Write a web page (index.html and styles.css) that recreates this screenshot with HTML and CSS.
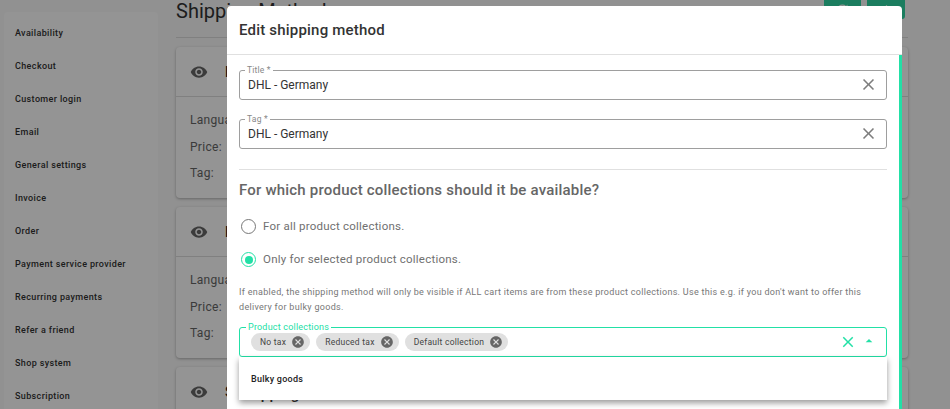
FILE: index.html
```html
<!DOCTYPE html>
<html lang="en">
<head>
<meta charset="utf-8">
<title>Edit shipping method</title>
<link rel="stylesheet" href="styles.css">
</head>
<body>
<div class="page">
  <nav class="sidebar">
    <a>Availability</a><a>Checkout</a><a>Customer login</a><a>Email</a><a>General settings</a><a>Invoice</a><a>Order</a><a>Payment service provider</a><a>Recurring payments</a><a>Refer a friend</a><a>Shop system</a><a>Subscription</a>
  </nav>
  <main class="main">
    <div class="main-head">
      <h1>Shipping Methods</h1>
      <div class="head-actions">
        <span class="head-btn"><svg viewBox="0 0 24 24"><path d="M17.65 6.35A7.96 7.96 0 0 0 12 4a8 8 0 1 0 7.73 10h-2.08A6 6 0 1 1 12 6c1.66 0 3.14.69 4.22 1.78L13 11h7V4z"/></svg></span>
        <span class="head-btn"><svg viewBox="0 0 24 24"><path d="M19 13h-6v6h-2v-6H5v-2h6V5h2v6h6z"/></svg></span>
      </div>
    </div>
    <section class="card">
      <div class="card-head"><svg class="eye" viewBox="0 0 24 24"><path d="M12 4.5C7 4.5 2.73 7.61 1 12c1.73 4.39 6 7.5 11 7.5s9.27-3.11 11-7.5c-1.73-4.39-6-7.5-11-7.5zM12 17c-2.76 0-5-2.24-5-5s2.24-5 5-5 5 2.24 5 5-2.24 5-5 5zm0-8c-1.66 0-3 1.34-3 3s1.34 3 3 3 3-1.34 3-3-1.34-3-3-3z"/></svg><b>DHL</b></div>
      <div class="card-body"><p>Language:</p><p>Price:</p><p>Tag:</p></div>
    </section>
    <section class="card">
      <div class="card-head"><svg class="eye" viewBox="0 0 24 24"><path d="M12 4.5C7 4.5 2.73 7.61 1 12c1.73 4.39 6 7.5 11 7.5s9.27-3.11 11-7.5c-1.73-4.39-6-7.5-11-7.5zM12 17c-2.76 0-5-2.24-5-5s2.24-5 5-5 5 2.24 5 5-2.24 5-5 5zm0-8c-1.66 0-3 1.34-3 3s1.34 3 3 3 3-1.34 3-3-1.34-3-3-3z"/></svg><b>DHL</b></div>
      <div class="card-body"><p>Language:</p><p>Price:</p><p>Tag:</p></div>
    </section>
    <section class="card">
      <div class="card-head"><svg class="eye" viewBox="0 0 24 24"><path d="M12 4.5C7 4.5 2.73 7.61 1 12c1.73 4.39 6 7.5 11 7.5s9.27-3.11 11-7.5c-1.73-4.39-6-7.5-11-7.5zM12 17c-2.76 0-5-2.24-5-5s2.24-5 5-5 5 2.24 5 5-2.24 5-5 5zm0-8c-1.66 0-3 1.34-3 3s1.34 3 3 3 3-1.34 3-3-1.34-3-3-3z"/></svg><b>Shipping</b></div>
    </section>
  </main>
</div>
<div class="scrim"></div>
<div class="modal" role="dialog">
  <header class="modal-head">Edit shipping method</header>
  <div class="modal-body">
    <div class="content">
      <div class="field">
        <label class="float">Title *</label>
        <span class="value">DHL - Germany</span>
        <svg class="x" viewBox="0 0 24 24"><path d="M19 6.41 17.59 5 12 10.59 6.41 5 5 6.41 10.59 12 5 17.59 6.41 19 12 13.41 17.59 19 19 17.59 13.41 12z"/></svg>
      </div>
      <div class="field">
        <label class="float">Tag *</label>
        <span class="value">DHL - Germany</span>
        <svg class="x" viewBox="0 0 24 24"><path d="M19 6.41 17.59 5 12 10.59 6.41 5 5 6.41 10.59 12 5 17.59 6.41 19 12 13.41 17.59 19 19 17.59 13.41 12z"/></svg>
      </div>
      <hr class="rule">
      <h2>For which product collections should it be available?</h2>
      <label class="radio"><span class="dot"></span>For all product collections.</label>
      <label class="radio on"><span class="dot"></span>Only for selected product collections.</label>
      <p class="hint">If enabled, the shipping method will only be visible if ALL cart items are from these product collections. Use this e.g. if you don't want to offer this delivery for bulky goods.</p>
      <div class="field active">
        <label class="float">Product collections</label>
        <div class="chips">
          <span class="chip">No tax<svg viewBox="0 0 24 24"><path d="M12 2C6.47 2 2 6.47 2 12s4.47 10 10 10 10-4.47 10-10S17.53 2 12 2zm5 13.59L15.59 17 12 13.41 8.41 17 7 15.59 10.59 12 7 8.41 8.41 7 12 10.59 15.59 7 17 8.41 13.41 12 17 15.59z"/></svg></span>
          <span class="chip">Reduced tax<svg viewBox="0 0 24 24"><path d="M12 2C6.47 2 2 6.47 2 12s4.47 10 10 10 10-4.47 10-10S17.53 2 12 2zm5 13.59L15.59 17 12 13.41 8.41 17 7 15.59 10.59 12 7 8.41 8.41 7 12 10.59 15.59 7 17 8.41 13.41 12 17 15.59z"/></svg></span>
          <span class="chip">Default collection<svg viewBox="0 0 24 24"><path d="M12 2C6.47 2 2 6.47 2 12s4.47 10 10 10 10-4.47 10-10S17.53 2 12 2zm5 13.59L15.59 17 12 13.41 8.41 17 7 15.59 10.59 12 7 8.41 8.41 7 12 10.59 15.59 7 17 8.41 13.41 12 17 15.59z"/></svg></span>
        </div>
        <svg class="x" viewBox="0 0 24 24"><path d="M19 6.41 17.59 5 12 10.59 6.41 5 5 6.41 10.59 12 5 17.59 6.41 19 12 13.41 17.59 19 19 17.59 13.41 12z"/></svg>
        <svg class="caret" viewBox="0 0 24 24"><path d="m7 14 5-5 5 5z"/></svg>
        <div class="menu"><div class="menu-item">Bulky goods</div></div>
      </div>
      <h3 class="next">Shipping</h3>
    </div>
    <div class="scrollbar"></div>
  </div>
</div>
</body>
</html>
```
FILE: styles.css
```css
* { box-sizing: border-box; }
html, body { margin: 0; height: 100%; overflow: hidden; }
body { font-family: Roboto, "Liberation Sans", sans-serif; background: #fff; color: #222; position: relative; }

.page { display: flex; height: 409px; background: #fafafa; padding-left: 4px; overflow: hidden; }
.sidebar { width: 154px; margin-top: 12px; height: 460px; background: #fff; border-radius: 4px; padding: 12px 0 0 11px; display: flex; flex-direction: column; flex: none; }
.sidebar a { height: 33px; flex: none; line-height: 19px; font-size: 9px; font-weight: 500; letter-spacing: .37px; color: #333; }

.main { width: 732px; margin-left: 18px; flex: none; }
.main-head { height: 38px; border-bottom: 1px solid #ddd; margin: 0 0 9px; display: flex; justify-content: space-between; }
.main-head h1 { margin: -1px 0 0; font-size: 20px; font-weight: 400; line-height: 24px; color: #333; }
.head-actions { display: flex; gap: 6px; margin-right: 3px; }
.head-btn { width: 37px; height: 19px; background: #2fd8a4; border-radius: 0 0 3px 3px; display: flex; justify-content: center; }
.head-btn:last-child { width: 38px; }
.head-btn svg { width: 15px; height: 15px; margin-top: 2px; fill: #fff; }
.card { height: 151px; margin-bottom: 9px; background: #fff; border-radius: 4px; box-shadow: 0 1px 3px rgba(0,0,0,.3); }
.card-head { height: 50px; border-bottom: 1px solid #ddd; display: flex; align-items: center; padding: 1px 0 0 14px; gap: 17px; font-size: 14px; }
.card-head b { font-weight: 500; }
.eye { width: 18px; height: 18px; fill: #666; }
.card-body { padding: 15px 14px 0; font-size: 12px; letter-spacing: .3px; color: #666; }
.card-body p { margin: 0 0 10px; line-height: 16.5px; }

.scrim { position: absolute; inset: 0; background: rgba(0,0,0,.42); }

.modal { position: absolute; left: 227px; top: 6px; width: 675px; height: 420px; background: #fff; border-radius: 4px 4px 0 0; display: flex; flex-direction: column; }
.modal-head { height: 49px; flex: none; border-bottom: 1px solid #e0e0e0; padding: 0 12px; font-size: 15px; font-weight: 500; line-height: 48px; letter-spacing: .2px; color: #333; }
.modal-body { flex: 1; position: relative; }
.content { padding: 15px 15px 0 12px; display: flex; flex-direction: column; position: relative; }
.scrollbar { position: absolute; right: 0; top: 0; bottom: 0; width: 3px; background: #22e0a6; }

.field { position: relative; height: 30px; flex: none; border: 1px solid #9e9e9e; border-radius: 3px; display: flex; align-items: center; padding: 0 0 1px 8px; margin-bottom: 19px; }
.float { position: absolute; left: 5px; top: -5px; padding: 0 2px; background: #fff; font-size: 8.5px; line-height: 9px; color: #888; letter-spacing: .2px; }
.value { font-size: 12px; color: #333; letter-spacing: 0; }
.x { position: absolute; right: 8px; top: 4px; width: 19px; height: 19px; fill: #7d7d7d; }

.rule { width: 100%; border: 0; border-top: 1px solid #e0e0e0; margin: 1px 0 11px; }
h2 { margin: 0 0 17px; font-size: 15px; font-weight: 500; letter-spacing: .2px; line-height: 18px; color: #666; }
.radio { display: flex; align-items: center; gap: 7px; height: 19px; margin-bottom: 14px; font-size: 11.5px; letter-spacing: .22px; color: #707070; }
.dot { width: 15px; height: 15px; border: 1.5px solid #777; border-radius: 50%; margin: 2px 0 0 2px; display: flex; align-items: center; justify-content: center; flex: none; }
.on .dot { border-color: #22e0a6; }
.on .dot::after { content: ""; width: 8px; height: 8px; border-radius: 50%; background: #22e0a6; }
.hint { margin: 3px 0 12px; font-size: 9px; line-height: 15px; letter-spacing: .3px; color: #777; }

.active { border-color: #22e0a6; margin-bottom: 0; padding: 0 0 0 11px; }
.active .float { color: #22e0a6; font-size: 9px; left: 6px; }
.chips { display: flex; gap: 6px; }
.chip { height: 18px; border-radius: 9px; background: #e0e0e0; display: flex; align-items: center; padding: 0 5px 0 9px; gap: 5px; font-size: 8.5px; letter-spacing: .25px; color: #444; }
.chip svg { width: 14px; height: 14px; fill: #666; flex: none; }
.active .x { right: 29px; top: 5px; width: 18px; height: 18px; fill: #22e0a6; }
.caret { position: absolute; right: 9px; top: 5px; width: 16px; height: 16px; fill: #22e0a6; }

.menu { position: absolute; left: -1px; right: -1px; top: 29px; height: 43px; background: #fff; box-shadow: 0 3px 6px rgba(0,0,0,.4); display: flex; align-items: center; padding-left: 12px; z-index: 2; }
.menu-item { font-size: 9px; font-weight: 500; letter-spacing: .25px; color: #222; }
.next { margin: 28px 0 0; font-size: 15px; font-weight: 500; line-height: 18px; letter-spacing: .2px; color: #333; }
```
